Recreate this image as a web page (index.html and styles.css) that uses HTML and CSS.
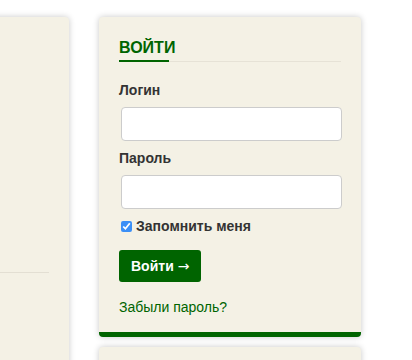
FILE: index.html
```html
<!DOCTYPE html>
<html lang="ru">
<head>
  <meta charset="UTF-8" />
  <meta name="viewport" content="width=device-width, initial-scale=1" />
  <title>Войти</title>
  <link rel="stylesheet" href="styles.css">
</head>
<body>
  <div class="page">
    <!-- левая колонка: основной контент -->
    <div class="card main-card">
      <div class="divider"></div>
    </div>

    <!-- правая колонка: вход -->
    <div class="sidebar">
      <div class="card login-card">
        <h3 class="card-title">ВОЙТИ</h3>
        <form class="login-form">
          <label for="login">Логин</label>
          <input type="text" id="login" name="login">

          <label for="password">Пароль</label>
          <input type="password" id="password" name="password">

          <label class="remember"><input type="checkbox" checked> Запомнить меня</label>

          <button class="login-btn" type="submit">Войти <span class="arrow">→</span></button>
        </form>
        <a class="forgot-link" href="#">Забыли пароль?</a>
      </div>

      <div class="card next-card"></div>
    </div>
  </div>
</body>
</html>
```

FILE: styles.css
```css
:root {
  --green: #006400;
  --card-bg: #f4f1e5;
  --text: #333;
  --font-sans: 'Liberation Sans', Arial, sans-serif;
}
body {
  margin: 0;
  padding: 0;
  background: #fff;
  font-family: var(--font-sans);
  font-size: 14px;
  color: var(--text);
  overflow: hidden;
}
.page {
  display: grid;
  grid-template-columns: 209px 262px;
  gap: 30px;
  margin-left: -140px;
  padding-top: 17px;
  align-items: start;
}
.card {
  background: var(--card-bg);
  border-radius: 4px;
  box-shadow: 0 0 6px rgba(0,0,0,0.22);
}
.main-card {
  min-height: 420px;
  padding: 0 20px;
}
.divider {
  height: 1px;
  background: #e3dfd3;
  margin-top: 255px;
}
.sidebar {
  display: flex;
  flex-direction: column;
  gap: 10px;
}
.login-card {
  padding: 21px 20px 15px;
  border-bottom: 5px solid var(--green);
}
.card-title {
  position: relative;
  margin: 0;
  font-size: 16px;
  line-height: 20px;
  font-weight: bold;
  color: var(--green);
  border-bottom: 1px solid #e6e2d6;
  padding-bottom: 3px;
}
.card-title::after {
  content: "";
  position: absolute;
  left: 0;
  bottom: -1px;
  width: 50px;
  height: 2px;
  background: var(--green);
}
.login-form {
  display: flex;
  flex-direction: column;
  align-items: flex-start;
  margin-top: 18px;
}
.login-form label {
  font-weight: bold;
  line-height: 20px;
  margin-bottom: 7px;
}
.login-form input[type="text"],
.login-form input[type="password"] {
  box-sizing: border-box;
  width: 221px;
  height: 34px;
  margin: 0 0 7px 2px;
  border: 1px solid #ccc;
  border-radius: 4px;
  background: #fff;
  font-size: 14px;
}
.login-form label.remember {
  display: flex;
  align-items: center;
  gap: 4px;
  margin: 0;
}
.remember input {
  width: 11px;
  height: 11px;
  margin: 0 0 0 2px;
  accent-color: #3b8ff6;
}
.login-btn {
  margin-top: 14px;
  padding: 0 12px;
  height: 32px;
  background: var(--green);
  color: #fff;
  border: none;
  border-radius: 3px;
  font-family: var(--font-sans);
  font-size: 14px;
  font-weight: bold;
  cursor: pointer;
}
.arrow {
  font-family: 'DejaVu Sans', sans-serif;
  font-weight: normal;
}
.forgot-link {
  display: block;
  margin-top: 15px;
  line-height: 20px;
  color: var(--green);
  text-decoration: none;
}
.next-card {
  min-height: 60px;
}
```
